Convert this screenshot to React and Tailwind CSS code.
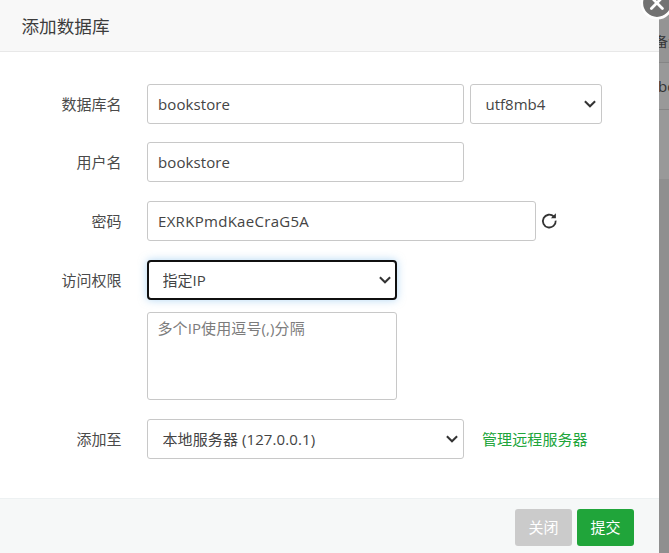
import React from 'react';

const control =
  'block h-10 shrink-0 rounded-[3px] border border-[#c8c8c8] bg-white text-[15px] text-[#444] outline-none';

function Chevron() {
  return (
    <svg
      className="pointer-events-none absolute right-[5px] top-[15px] h-[10px] w-[14px]"
      viewBox="0 0 14 10"
      fill="none"
      stroke="#333"
      strokeWidth="2"
    >
      <path d="M1.9 2.2 7 7.3l5.1-5.1" />
    </svg>
  );
}

function Select({ value, className, focused = false }) {
  return (
    <div className={`relative shrink-0 ${className}`}>
      <select
        defaultValue={value}
        className={
          focused
            ? 'block h-10 w-full appearance-none rounded-[4px] border-2 border-[#101010] bg-white pl-[13.5px] text-[15px] text-[#444] shadow-[0_0_8px_rgba(102,175,233,0.5)] outline-none'
            : `${control} w-full appearance-none pl-[14.5px]`
        }
      >
        <option>{value}</option>
      </select>
      <Chevron />
    </div>
  );
}

function Row({ label, className = '', children }) {
  return (
    <div className={`flex ${className}`}>
      <div className="mr-[25.5px] h-10 w-[121.5px] shrink-0 text-right text-[15px] leading-10 text-[#4a4a4a]">
        {label}
      </div>
      {children}
    </div>
  );
}

export default function App() {
  return (
    <div className="relative flex h-[553px] w-[669px] overflow-hidden bg-[#999] font-['Open_Sans','Noto_Sans_CJK_SC',sans-serif] text-[#444]">
      <div className="z-10 flex h-full w-[659px] shrink-0 flex-col bg-white">
        <header className="h-[52px] shrink-0 border-b border-[#e8e8e8] bg-[#f8f8f8] pl-[21.5px] text-[17.6px] leading-[53px] text-[#3c3c3c]">
          添加数据库
        </header>
        <main className="flex-1 pt-8">
          <Row label="数据库名">
            <input readOnly value="bookstore" className={`${control} w-[317px] px-[10px] tracking-[0.1px]`} />
            <Select value="utf8mb4" className="ml-[6px] w-[132px]" />
          </Row>
          <Row label="用户名" className="mt-[18px]">
            <input readOnly value="bookstore" className={`${control} w-[317px] px-[10px] tracking-[0.1px]`} />
          </Row>
          <Row label="密码" className="mt-[19px]">
            <input readOnly value="EXRKPmdKaeCraG5A" className={`${control} w-[389px] px-[10px] tracking-[0.3px]`} />
            <svg className="ml-[5px] mt-[11px] h-[17px] w-[17px]" viewBox="0 0 17 17" fill="none">
              <path d="M12.8 4.5A6.4 6.4 0 1 0 14.7 8.6" stroke="#333" strokeWidth="1.8" />
              <path d="M14.9 1.3v5H9.9z" fill="#333" />
            </svg>
          </Row>
          <Row label="访问权限" className="mt-[19px]">
            <div>
              <Select value="指定IP" className="w-[250px]" focused />
              <textarea
                placeholder="多个IP使用逗号(,)分隔"
                className="mt-3 block h-[88px] w-[250px] resize-none rounded-[3px] border border-[#c8c8c8] px-[9.5px] py-[5px] text-[15px] leading-[21px] tracking-[0.1px] outline-none placeholder:text-[#7c7c7c]"
              />
            </div>
          </Row>
          <Row label="添加至" className="mt-[19px]">
            <Select value="本地服务器 (127.0.0.1)" className="w-[317px] tracking-[0.1px]" />
            <a className="ml-[18px] text-[15px] leading-10 tracking-[0.1px] text-[#20a53a]">管理远程服务器</a>
          </Row>
        </main>
        <footer className="flex h-[55px] shrink-0 justify-end gap-[5px] border-t border-[#edf1f2] bg-[#f6f8f8] pr-[25px] pt-[10px]">
          <button className="h-[37px] w-[57px] rounded-[3px] bg-[#cbcbcb] text-[15px] text-white">关闭</button>
          <button className="h-[37px] w-[57px] rounded-[3px] bg-[#20a53a] text-[15px] text-white">提交</button>
        </footer>
      </div>
      <aside className="flex w-[10px] shrink-0 flex-col overflow-hidden text-[15px] text-[#333]">
        <div className="h-5 shrink-0" />
        <div className="h-[43px] shrink-0 whitespace-nowrap border-b border-[#858585] bg-[#949494] text-[13px] leading-[43px]">
          <span className="-ml-[4px]">备注</span>
        </div>
        <div className="h-[47px] shrink-0 border-b border-[#858585] bg-[#999] leading-[47px]">
          <span className="-ml-[1px]">bookstore</span>
        </div>
        <div className="h-[69px] shrink-0 bg-[#999]" />
        <div className="flex-1 bg-[#8f8f8f]" />
      </aside>
      <svg className="absolute left-[640px] top-[-14px] z-20 h-[34px] w-[34px]" viewBox="0 0 34 34">
        <circle cx="17" cy="17" r="15.2" fill="#737373" stroke="#fff" strokeWidth="2.6" />
        <path d="m11.4 11.4 11 11m0-11-11 11" stroke="#fff" strokeWidth="2.8" strokeLinecap="round" />
      </svg>
    </div>
  );
}
